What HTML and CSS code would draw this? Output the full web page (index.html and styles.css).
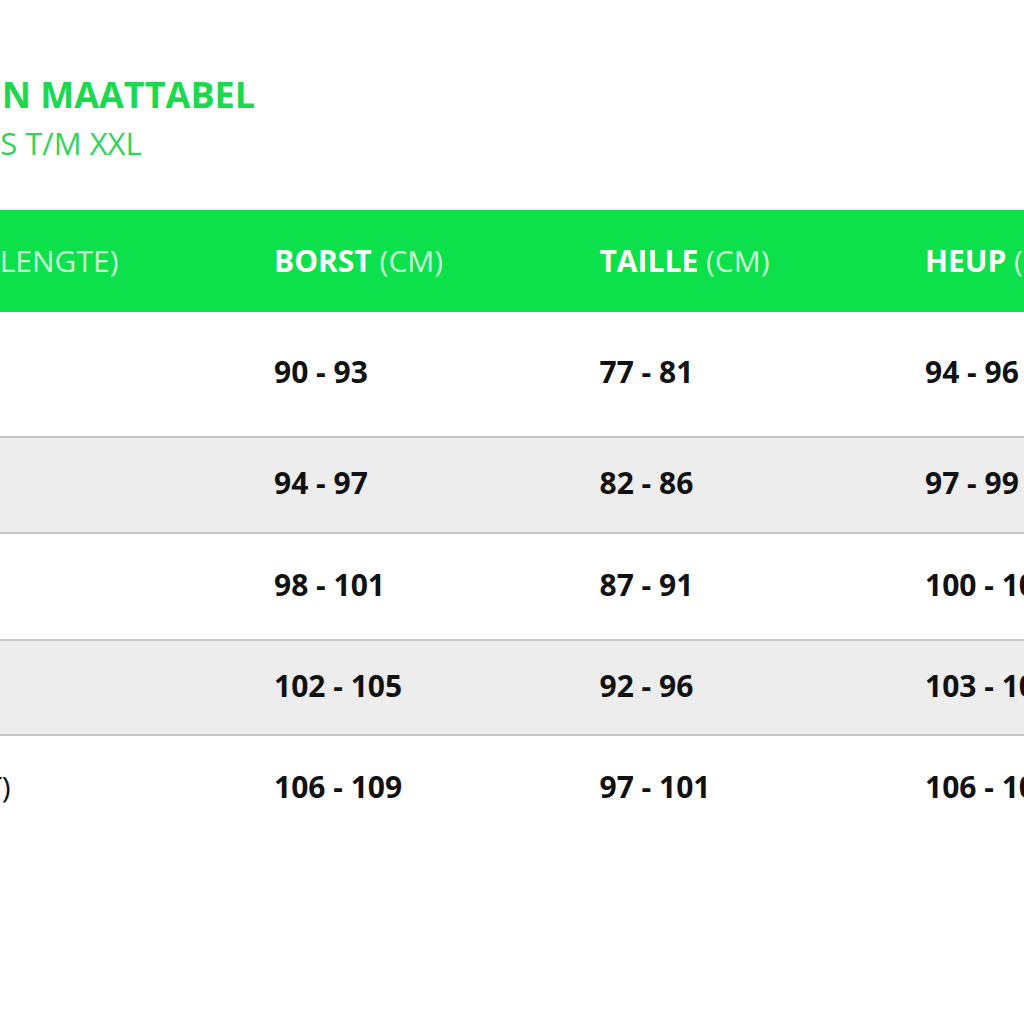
FILE: index.html
```html
<!DOCTYPE html>
<html lang="nl">
<head>
<meta charset="utf-8">
<title>Heren maattabel</title>
<link rel="stylesheet" href="styles.css">
</head>
<body>
<main class="sheet">
  <header class="heading">
    <h1 class="title">HEREN MAATTABEL</h1>
    <p class="subtitle">MAAT S T/M XXL</p>
  </header>
  <div class="table">
    <div class="row row-head">
      <div class="cell"><b>MAAT</b> (LENGTE)</div>
      <div class="cell"><b>BORST</b> (CM)</div>
      <div class="cell"><b>TAILLE</b> (CM)</div>
      <div class="cell"><b>HEUP</b> (CM)</div>
      <div class="cell"><b>BINNENBEEN</b> (CM)</div>
    </div>
    <div class="row row-1">
      <div class="cell"><b>S</b></div>
      <div class="cell"><b>90 - 93</b></div>
      <div class="cell"><b>77 - 81</b></div>
      <div class="cell"><b>94 - 96</b></div>
      <div class="cell"><b>80</b></div>
    </div>
    <div class="row row-2 alt">
      <div class="cell"><b>M</b></div>
      <div class="cell"><b>94 - 97</b></div>
      <div class="cell"><b>82 - 86</b></div>
      <div class="cell"><b>97 - 99</b></div>
      <div class="cell"><b>81</b></div>
    </div>
    <div class="row row-3">
      <div class="cell"><b>L</b></div>
      <div class="cell"><b>98 - 101</b></div>
      <div class="cell"><b>87 - 91</b></div>
      <div class="cell"><b>100 - 102</b></div>
      <div class="cell"><b>82</b></div>
    </div>
    <div class="row row-4 alt">
      <div class="cell"><b>XL</b></div>
      <div class="cell"><b>102 - 105</b></div>
      <div class="cell"><b>92 - 96</b></div>
      <div class="cell"><b>103 - 105</b></div>
      <div class="cell"><b>83</b></div>
    </div>
    <div class="row row-5">
      <div class="cell"><b>XXL</b> (LT)</div>
      <div class="cell"><b>106 - 109</b></div>
      <div class="cell"><b>97 - 101</b></div>
      <div class="cell"><b>106 - 108</b></div>
      <div class="cell"><b>84</b></div>
    </div>
  </div>
</main>
</body>
</html>
```

FILE: styles.css
```css
html, body {
  margin: 0;
  padding: 0;
  background: #ffffff;
}

body {
  width: 1024px;
  height: 1024px;
  overflow: hidden;
  font-family: "Open Sans", "Noto Sans", "Liberation Sans", sans-serif;
  color: #111111;
}

.sheet {
  padding-top: 73px;
}

.heading {
  display: flex;
  flex-direction: column;
  gap: 9px;
}

.title {
  margin: 0 0 0 -90px;
  font-size: 36px;
  line-height: 43px;
  font-weight: 700;
  color: #1bd84f;
  white-space: nowrap;
}

.subtitle {
  margin: 0 0 0 -92px;
  font-size: 31px;
  line-height: 36px;
  font-weight: 400;
  color: #30d35c;
  white-space: nowrap;
}

.table {
  margin-top: 49px;
  margin-left: -104px;
  display: flex;
  flex-direction: column;
}

.row {
  display: grid;
  grid-template-columns: 378px 325.5px 325.5px 325.5px 325.5px;
  align-items: center;
  box-sizing: border-box;
  white-space: nowrap;
  padding-bottom: 4px;
}

.row + .row:not(.row-1) {
  border-top: 2px solid #c6c6c6;
}

.cell {
  font-size: 30px;
  line-height: 1;
}

.cell b {
  font-weight: 700;
}

.row-head {
  height: 102px;
  padding-bottom: 0;
  background: #0ce14b;
  color: rgba(255, 255, 255, 0.8);
}

.row-head .cell b {
  color: #ffffff;
}

.alt {
  background: #ededed;
}

.row-1 { height: 124px; }
.row-2 { height: 96px; }
.row-3 { height: 107px; }
.row-4 { height: 95px; }
.row-5 { height: 108px; }
```
